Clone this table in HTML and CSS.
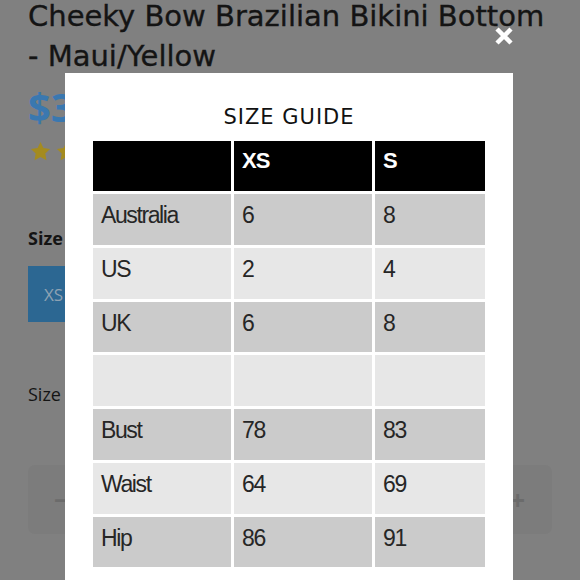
FILE: index.html
```html
<!DOCTYPE html>
<html>
<head>
<meta charset="utf-8">
<link rel="stylesheet" href="styles.css">
</head>
<body>
<div class="page">
  <h1 class="title">Cheeky Bow Brazilian Bikini Bottom - Maui/Yellow</h1>
  <div class="price">$35.00</div>
  <div class="stars">
    <svg viewBox="0 0 24 24"><polygon points="12,2 15.09,8.26 22,9.27 17,14.14 18.18,21.02 12,17.77 5.82,21.02 7,14.14 2,9.27 8.91,8.26"/></svg>
    <svg viewBox="0 0 24 24"><polygon points="12,2 15.09,8.26 22,9.27 17,14.14 18.18,21.02 12,17.77 5.82,21.02 7,14.14 2,9.27 8.91,8.26"/></svg>
    <svg viewBox="0 0 24 24"><polygon points="12,2 15.09,8.26 22,9.27 17,14.14 18.18,21.02 12,17.77 5.82,21.02 7,14.14 2,9.27 8.91,8.26"/></svg>
    <svg viewBox="0 0 24 24"><polygon points="12,2 15.09,8.26 22,9.27 17,14.14 18.18,21.02 12,17.77 5.82,21.02 7,14.14 2,9.27 8.91,8.26"/></svg>
    <svg viewBox="0 0 24 24"><polygon points="12,2 15.09,8.26 22,9.27 17,14.14 18.18,21.02 12,17.77 5.82,21.02 7,14.14 2,9.27 8.91,8.26"/></svg>
  </div>
  <div class="label label-bold">Size</div>
  <div class="size-options">
    <button class="size-btn">XS</button>
  </div>
  <div class="label">Size Guide</div>
  <div class="qty">
    <span class="qty-sign">&minus;</span>
    <span class="qty-sign">+</span>
  </div>
</div>

<button class="close" aria-label="Close">
  <svg viewBox="0 0 18 18"><path d="M2 2 L16 16 M16 2 L2 16"/></svg>
</button>

<div class="modal">
  <h2 class="modal-title">SIZE GUIDE</h2>
  <div class="grid">
    <div class="cell head"></div><div class="cell head">XS</div><div class="cell head">S</div>
    <div class="cell dark">Australia</div><div class="cell dark">6</div><div class="cell dark">8</div>
    <div class="cell light">US</div><div class="cell light">2</div><div class="cell light">4</div>
    <div class="cell dark">UK</div><div class="cell dark">6</div><div class="cell dark">8</div>
    <div class="cell light"></div><div class="cell light"></div><div class="cell light"></div>
    <div class="cell dark">Bust</div><div class="cell dark">78</div><div class="cell dark">83</div>
    <div class="cell light">Waist</div><div class="cell light">64</div><div class="cell light">69</div>
    <div class="cell dark">Hip</div><div class="cell dark">86</div><div class="cell dark">91</div>
  </div>
</div>
</body>
</html>
```

FILE: styles.css
```css
html, body {
  margin: 0;
  padding: 0;
  height: 100%;
  overflow: hidden;
}
body {
  background: #808080;
  font-family: "Open Sans", "Liberation Sans", sans-serif;
  color: #111;
}
.page {
  padding: 0 28px;
}
.title {
  margin: -4px 0 0 0;
  font-family: "DejaVu Sans", sans-serif;
  font-size: 29px;
  line-height: 40px;
  font-weight: 400;
  color: #141414;
  -webkit-text-stroke: 0.35px #141414;
}
.price {
  margin-top: 7px;
  font-size: 40px;
  line-height: 48px;
  font-weight: 700;
  color: #3a78b0;
}
.stars {
  display: flex;
  gap: 3px;
  margin-top: 9px;
  height: 23px;
  padding-left: 1px;
}
.stars svg {
  width: 23px;
  height: 23px;
  fill: #a48b1f;
}
.label {
  font-size: 18px;
  line-height: 24px;
  color: #141414;
}
.label-bold {
  font-weight: 700;
  margin-top: 63px;
}
.size-options {
  display: flex;
  margin-top: 16px;
}
.size-btn {
  width: 70px;
  height: 56px;
  border: none;
  background: #2c6792;
  color: #8ea2b3;
  font-family: "Open Sans", sans-serif;
  font-size: 17px;
  padding: 0 0 0 16px;
  text-align: left;
}
.size-options + .label {
  margin-top: 60px;
}
.qty {
  margin-top: 59px;
  height: 69px;
  border-radius: 7px;
  background: #7c7c7c;
  display: flex;
  align-items: center;
  justify-content: space-between;
  padding: 0 27px 0 26px;
}
.qty-sign {
  font-size: 26px;
  color: #6b6b6b;
  font-weight: 700;
}
.close {
  position: absolute;
  left: 495px;
  top: 27px;
  width: 18px;
  height: 18px;
  padding: 0;
  border: none;
  background: none;
}
.close svg {
  width: 18px;
  height: 18px;
  display: block;
  stroke: #fff;
  stroke-width: 4.5;
  fill: none;
}
.modal {
  position: absolute;
  left: 65px;
  top: 73px;
  width: 448px;
  bottom: -20px;
  background: #fff;
  box-sizing: border-box;
  padding: 32px 28px 0;
}
.modal-title {
  margin: 0;
  text-align: center;
  font-family: "DejaVu Sans", sans-serif;
  font-weight: 400;
  font-size: 21px;
  line-height: 24px;
  letter-spacing: 1px;
  color: #111;
}
.grid {
  margin-top: 12px;
  display: grid;
  grid-template-columns: 138px 138px 1fr;
  grid-template-rows: 50px repeat(7, 50.75px);
  row-gap: 3px;
  column-gap: 3px;
}
.cell {
  font-family: "Liberation Sans", Arial, sans-serif;
  font-size: 23px;
  line-height: 23px;
  letter-spacing: -1.4px;
  padding: 10px 0 0 8px;
  color: #262626;
}
.head {
  background: #000;
  color: #fff;
  font-weight: 700;
  font-size: 22px;
  padding-top: 8px;
  letter-spacing: -1px;
}
.dark {
  background: #cbcbcb;
}
.light {
  background: #e7e7e7;
}
```
